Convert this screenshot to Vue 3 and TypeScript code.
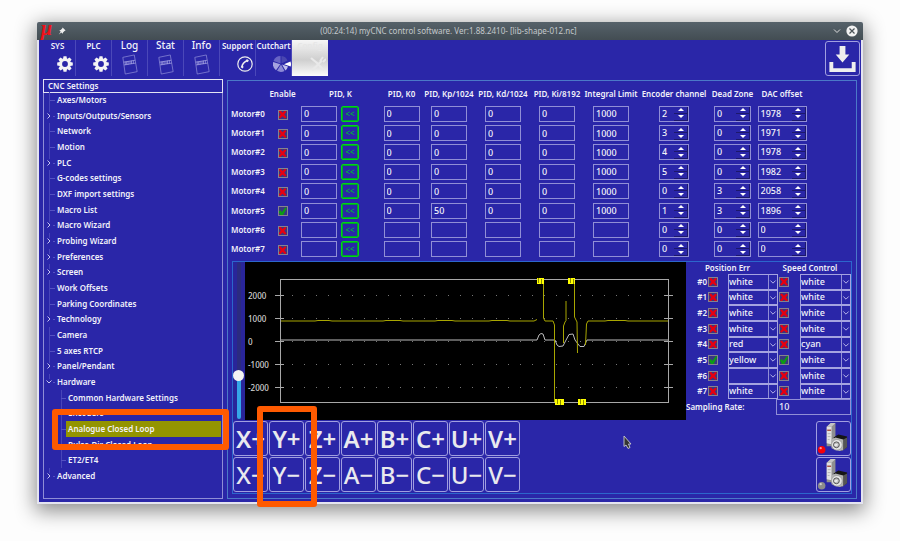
<script setup lang="ts">
import { reactive, ref } from 'vue'

interface TreeItem {
  label: string
  depth: number
  state?: 'closed' | 'open'
  selected?: boolean
}

interface Motor {
  enabled: boolean
  values: string[]
  encoder: number
  deadZone: number
  offset: number
}

interface Trace {
  position: boolean
  positionColor: string
  speed: boolean
  speedColor: string
}

const tabs = [
  { label: 'SYS', icon: 'gear' },
  { label: 'PLC', icon: 'gear' },
  { label: 'Log', icon: 'page', large: true },
  { label: 'Stat', icon: 'page', large: true },
  { label: 'Info', icon: 'page', large: true },
  { label: 'Support', icon: 'phone' },
  { label: 'Cutchart', icon: 'pie' },
  { label: 'Config', icon: 'tools', active: true },
]

const tree: TreeItem[] = [
  { label: 'Axes/Motors', depth: 0 },
  { label: 'Inputs/Outputs/Sensors', depth: 0, state: 'closed' },
  { label: 'Network', depth: 0 },
  { label: 'Motion', depth: 0 },
  { label: 'PLC', depth: 0, state: 'closed' },
  { label: 'G-codes settings', depth: 0 },
  { label: 'DXF import settings', depth: 0 },
  { label: 'Macro List', depth: 0 },
  { label: 'Macro Wizard', depth: 0, state: 'closed' },
  { label: 'Probing Wizard', depth: 0, state: 'closed' },
  { label: 'Preferences', depth: 0, state: 'closed' },
  { label: 'Screen', depth: 0, state: 'closed' },
  { label: 'Work Offsets', depth: 0 },
  { label: 'Parking Coordinates', depth: 0 },
  { label: 'Technology', depth: 0, state: 'closed' },
  { label: 'Camera', depth: 0 },
  { label: '5 axes RTCP', depth: 0 },
  { label: 'Panel/Pendant', depth: 0, state: 'closed' },
  { label: 'Hardware', depth: 0, state: 'open' },
  { label: 'Common Hardware Settings', depth: 1 },
  { label: 'Encoders', depth: 1 },
  { label: 'Analogue Closed Loop', depth: 1, selected: true },
  { label: 'Pulse-Dir Closed Loop', depth: 1 },
  { label: 'ET2/ET4', depth: 1 },
  { label: 'Advanced', depth: 0, state: 'closed' },
]

const gains = ['PID, K0', 'PID, Kp/1024', 'PID, Kd/1024', 'PID, Ki/8192', 'Integral Limit']

const motor = (enabled: boolean, values: string[], encoder: number, deadZone: number, offset: number): Motor =>
  ({ enabled, values, encoder, deadZone, offset })

const motors = reactive<Motor[]>([
  motor(false, ['0', '0', '0', '0', '0', '1000'], 2, 0, 1978),
  motor(false, ['0', '0', '0', '0', '0', '1000'], 3, 0, 1971),
  motor(false, ['0', '0', '0', '0', '0', '1000'], 4, 0, 1978),
  motor(false, ['0', '0', '0', '0', '0', '1000'], 5, 0, 1982),
  motor(false, ['0', '0', '0', '0', '0', '1000'], 0, 3, 2058),
  motor(true, ['0', '0', '50', '0', '0', '1000'], 1, 3, 1896),
  motor(false, ['', '', '', '', '', ''], 0, 0, 0),
  motor(false, ['', '', '', '', '', ''], 0, 0, 0),
])

const spins: { key: 'encoder' | 'deadZone' | 'offset'; label: string }[] = [
  { key: 'encoder', label: 'Encoder channel' },
  { key: 'deadZone', label: 'Dead Zone' },
  { key: 'offset', label: 'DAC offset' },
]

const traces = reactive<Trace[]>(
  ['white', 'white', 'white', 'white', 'red', 'yellow', '', 'white'].map((color, i) => ({
    position: i === 5,
    positionColor: color,
    speed: i === 5,
    speedColor: i === 4 ? 'cyan' : 'white',
  })),
)
const colors = ['', 'white', 'red', 'cyan', 'yellow']

const scale = ref(26)
const samplingRate = ref('10')

const ticks = [
  { label: '2000', y: 33 },
  { label: '1000', y: 56 },
  { label: '0', y: 79 },
  { label: '-1000', y: 102 },
  { label: '-2000', y: 125 },
]
const axes = ['X', 'Y', 'Z', 'A', 'B', 'C', 'U', 'V']
const teeth = [0, 45, 90, 135, 180, 225, 270, 315]
</script>

<template>
  <main class="desktop">
    <div class="window">
      <header class="titlebar">
        <span class="mu">μ</span>
        <svg class="pin" viewBox="0 0 8 8"><path d="M4.600 .4 7.600 3.400 6.500 3.900 5 5.400 4.800 6.700 3.300 5.400 .8 7.500 2.700 4.700 1.300 3.300 2.700 3 4.200 1.500Z" fill="#eee" /></svg>
        <h1>(00:24:14) myCNC control software. Ver:1.88.2410- [lib-shape-012.nc]</h1>
        <button class="chrome" aria-label="Minimize">
          <svg viewBox="0 0 12 12"><path d="m3 4.500 3 3 3-3" fill="none" stroke="#ddd" /></svg>
        </button>
        <button class="chrome" aria-label="Close">
          <svg viewBox="0 0 12 12"><circle cx="6" cy="6" r="5.600" fill="#f2f2f2" /><path d="m3.500 3.500 5 5m0-5-5 5" stroke="#4a5257" stroke-width="1.200" /></svg>
        </button>
      </header>

      <div class="toolbar">
        <nav class="tabs">
          <button v-for="tab in tabs" :key="tab.label" :class="['tab', { large: tab.large, active: tab.active }]">
            <span>{{ tab.label }}</span>
            <svg v-if="tab.icon === 'gear'" class="icon right" viewBox="0 0 16 16">
              <circle cx="8" cy="8" r="4.300" fill="none" stroke="#f4f4f4" stroke-width="2.800" />
              <path v-for="a in teeth" :key="a" d="M6.500 .2h3l.5 2.800h-4Z" fill="#f4f4f4" :transform="`rotate(${a} 8 8)`" />
            </svg>
            <svg v-else-if="tab.icon === 'page'" class="icon page" viewBox="0 0 18 22">
              <g fill="none" stroke="#9896dc" stroke-width=".7">
                <path d="M1.500 3.500 13.500 1 16.500 18.500 4 21Z" />
                <path d="M2.500 8.500 14.500 6.500M3 11.500l12-2M4 8v3.500M5.500 8v3m1.500-3.500v3.500m2-3.500v3m1.500-3.500v3.500m2-3.500v3" stroke="#b3b1ea" />
              </g>
            </svg>
            <svg v-else-if="tab.icon === 'phone'" class="icon right" viewBox="0 0 16 16">
              <circle cx="8" cy="8" r="7.200" fill="none" stroke="#eee" stroke-width="1.200" />
              <path d="M4.900 11Q5.500 6.500 9.900 4.700" stroke="#eee" stroke-width="1.500" fill="none" />
              <path d="m4.200 10.400 2 1.200M9.300 3.900l2 1.500" stroke="#eee" stroke-width="2" />
            </svg>
            <svg v-else-if="tab.icon === 'pie'" class="icon pie" viewBox="0 0 18 16">
              <path d="M7.500 7.500V0A7.500 7.500 0 0 0 .5 5Z" fill="#6865c5" />
              <path d="M8.500 7.500V0a7 7 0 0 1 6 4.500Z" fill="#4946b0" />
              <path d="M7.300 8.300.2 6A8 8 0 0 0 3 14.200Z" fill="#a6a4e0" />
              <path d="M8 8.500 4 14.800a8 8 0 0 0 7.500.2Z" fill="#8c89d5" />
              <path d="M9 8.500l3.400 6A8 8 0 0 0 15 10.500Z" fill="#c1bfeb" />
              <path d="m11 8.300 6.500-2.800a8 8 0 0 1 .2 5Z" fill="#fff" />
            </svg>
            <svg v-else class="icon right" viewBox="0 0 16 16">
              <path d="m1 2 6 5 7 7.500M2 14.500 12 4.500" stroke="#e9e9e9" stroke-width="2.200" fill="none" />
              <path d="m10 5 3-4m0 5 3-3" stroke="#e9e9e9" stroke-width="2" />
            </svg>
          </button>
        </nav>
        <button class="save frame" aria-label="Save">
          <svg viewBox="0 0 34 34"><path d="M14 4h6v9h4L17 21 10 13h4Z" fill="#eee" /><path d="M5.500 20.500V29h23V20.500" fill="none" stroke="#eee" stroke-width="4" /></svg>
        </button>
      </div>

      <div class="body">
        <aside class="sidebar">
          <h2>CNC Settings</h2>
          <ul class="tree">
            <li v-for="item in tree" :key="item.label" :class="{ child: item.depth === 1, selected: item.selected, branch: item.state }">
              <svg v-if="item.state" class="chevron" viewBox="0 0 6 6">
                <path :d="item.state === 'open' ? 'm.5 1.500 2.500 2.500 2.500-2.500' : 'm1.500 .5 2.500 2.500-2.500 2.500'" />
              </svg>
              <a href="#">{{ item.label }}</a>
              <i v-if="item.selected" class="callout tree-callout"></i>
            </li>
          </ul>
        </aside>

        <section class="panel">
          <table class="motors">
            <colgroup>
              <col class="c-name"><col class="c-enable"><col class="c-k"><col class="c-k0">
              <col class="c-gain"><col class="c-gain"><col class="c-gain"><col class="c-gain">
              <col class="c-encoder"><col class="c-dead"><col class="c-offset"><col>
            </colgroup>
            <thead>
              <tr>
                <th></th>
                <th>Enable</th>
                <th>PID, K</th>
                <th v-for="gain in gains" :key="gain">{{ gain }}</th>
                <th v-for="spin in spins" :key="spin.key">{{ spin.label }}</th>
              </tr>
            </thead>
            <tbody>
              <tr v-for="(m, i) in motors" :key="i">
                <td class="name"><label :for="`enable-${i}`">Motor#{{ i }}</label></td>
                <td><input :id="`enable-${i}`" v-model="m.enabled" type="checkbox" class="tick"></td>
                <td>
                  <div class="k">
                    <input v-model="m.values[0]" class="field" :aria-label="`Motor ${i} PID, K`">
                    <button class="apply" :aria-label="`Apply K to motor ${i}`">&lt;&lt;</button>
                  </div>
                </td>
                <td v-for="(gain, g) in gains" :key="gain">
                  <input v-model="m.values[g + 1]" class="field" :aria-label="`Motor ${i} ${gain}`">
                </td>
                <td v-for="spin in spins" :key="spin.key">
                  <div :class="['spin', spin.key]">
                    <input v-model.number="m[spin.key]" type="number" :aria-label="`Motor ${i} ${spin.label}`">
                    <div class="steps">
                      <button aria-label="Increase" @click="m[spin.key]++"><svg viewBox="0 0 8 4"><path d="M4 0 8 4H0Z" /></svg></button>
                      <button aria-label="Decrease" @click="m[spin.key]--"><svg viewBox="0 0 8 4"><path d="M0 0h8L4 4Z" /></svg></button>
                    </div>
                  </div>
                </td>
              </tr>
            </tbody>
          </table>

          <div class="scope">
            <div class="scope-top">
              <div class="slider">
                <input v-model="scale" type="range" min="0" max="100" aria-label="Vertical scale">
              </div>
              <svg class="chart" viewBox="0 0 441 158">
                <g stroke="#a8a8a8" fill="none">
                  <rect x="35.500" y="17.500" width="388" height="123" />
                  <path v-for="t in ticks" :key="t.label" :d="`M30 ${t.y + 0.5}h9m380 0h9`" />
                </g>
                <path v-for="t in ticks" :key="t.y" :d="`M47 ${t.y + 0.5}H419`" stroke="#777" stroke-dasharray="1 11" />
                <text v-for="t in ticks" :key="t.label" x="3" :y="t.y + 4">{{ t.label }}</text>
                <path class="white" d="M36 78H292L294 73 296 71.500 298 72 300 78H310L312 83 314 84.500 318 84 320 80 324 72.500 328 72 330 78 333 82 335 84.500H339L341 80 342 78H423" />
                <path class="yellow" d="M36 59H70L73 58.500H84L87 59H138L141 58.500H155L158 59H190L193 58.500H207L210 59H244L247 58.500H262L265 59H289L292 57.500M298.500 20V56L300 59H308L309.500 63V140M318.500 81V64L320 60 321 58.500V39M329.500 20V55L332 60 332.500 91M340.500 83 341.500 62 343 59H360L363 58.500H380L383 59H423" />
                <path class="burst" d="M292 19h7M323 19h7M310 140h9M333 140h8" />
                <path class="grain" d="M293.500 16v5M296.500 17v5M325.500 16v5M328.500 17v5M312.500 137v5M315.500 138v5M335.500 137v5M338.500 138v5" />
              </svg>
              <div class="traces">
                <span class="group">Position Err</span>
                <span class="group speed">Speed Control</span>
                <template v-for="(t, i) in traces" :key="i">
                  <label class="number" :for="`pos-${i}`">#{{ i }}</label>
                  <input :id="`pos-${i}`" v-model="t.position" type="checkbox" class="tick">
                  <div class="combo">
                    <select v-model="t.positionColor" :aria-label="`Position colour ${i}`"><option v-for="c in colors" :key="c">{{ c }}</option></select>
                    <svg viewBox="0 0 9 14"><path d="m1.500 5.500 3 3 3-3" /></svg>
                  </div>
                  <input v-model="t.speed" type="checkbox" class="tick" :aria-label="`Speed ${i}`">
                  <div class="combo">
                    <select v-model="t.speedColor" :aria-label="`Speed colour ${i}`"><option v-for="c in colors" :key="c">{{ c }}</option></select>
                    <svg viewBox="0 0 9 14"><path d="m1.500 5.500 3 3 3-3" /></svg>
                  </div>
                </template>
                <div class="rate">
                  <label for="rate">Sampling Rate:</label>
                  <input id="rate" v-model="samplingRate">
                </div>
              </div>
            </div>

            <div class="scope-bottom">
              <div class="jog">
                <button v-for="a in axes" :key="`${a}+`" class="frame plus">{{ a }}+</button>
                <button v-for="a in axes" :key="`${a}-`" class="frame">{{ a }}−</button>
                <i class="callout jog-callout"></i>
              </div>
              <svg class="cursor" viewBox="0 0 9 14"><path d="M1 1v10.500L3 10l2 3.500L7 12.500 5.500 9H8Z" fill="#333" stroke="#ccc" stroke-width=".9" /></svg>
              <div class="drives">
                <button v-for="led in ['#f80008', '#8b8b8b']" :key="led" class="frame" aria-label="Servo drive">
                  <svg viewBox="0 0 34 34">
                    <path d="m10 5 5-4h4v22l-4 2h-5Z" fill="#8f8f8f" />
                    <path d="M10 5h5v18l-5-1Z" fill="#e2e2e2" />
                    <path d="m10 5 4-4h5l-4 4Z" fill="#c5c5c5" />
                    <path d="M10.500 8.500h4" stroke="#a55448" stroke-width="1.500" />
                    <path d="M11 12h3m-3 3h3m-3 3h2" stroke="#aaa" stroke-width=".8" />
                    <path d="m17 16 5-3 9 2v11l-6 4Z" fill="#151515" />
                    <path d="m27 18 4-2v10l-4 3Z" fill="#555" />
                    <path d="m15 18 4-2 8 2v11l-4 1-8-3Z" fill="#b3b3b3" />
                    <circle cx="20.500" cy="23.500" r="5.500" fill="#e6e6e6" stroke="#999" stroke-width=".8" />
                    <circle cx="20" cy="23.500" r="3" fill="#c2c2c2" stroke="#444" stroke-width=".9" />
                    <path d="m18 24 3-.5" stroke="#f4f4f4" stroke-width="1.500" />
                    <circle cx="4.800" cy="28.500" r="3.900" :fill="led" />
                    <circle cx="3.800" cy="27" r="1.200" fill="#fff" opacity=".6" />
                  </svg>
                </button>
              </div>
            </div>
          </div>
        </section>
      </div>
    </div>
  </main>
</template>

<style>
body {
  background: #fdfdfd;
}
</style>

<style scoped>
* {
  box-sizing: border-box;
}

.desktop {
  display: flex;
  min-height: 100vh;
  padding: 22px 37px 38px;
  overflow: hidden;
  color: #f2f2fa;
  font: 600 8px/12px 'Noto Sans', 'Open Sans', sans-serif;
}

.window {
  display: flex;
  flex: 1;
  flex-direction: column;
  min-width: 0;
  border: solid #e4e4f0;
  border-width: 0 2px 2px;
  border-radius: 2px 2px 0 0;
  background: #2a26a8;
  box-shadow: 0 5px 20px 2px rgb(0 0 0 / 45%);
}

button,
input,
select {
  min-width: 0;
  margin: 0;
  padding: 0;
  border: 0;
  border-radius: 0;
  outline: 0;
  background: none;
  color: inherit;
  font: inherit;
}

input,
select {
  font-weight: 500;
  font-size: 9px;
}

svg {
  display: block;
}

h1,
h2 {
  margin: 0;
  font: inherit;
}

.titlebar {
  display: flex;
  align-items: center;
  gap: 3px;
  height: 18px;
  margin: 0 -2px;
  padding: 0 5px 0 4px;
  border-radius: 2px 2px 0 0;
  background: linear-gradient(#56626a, #434d53);
}

.titlebar h1 {
  flex: 1;
  color: #c3c8cb;
  font-weight: 400;
  text-align: center;
}

.mu {
  width: 14px;
  padding-bottom: 6px;
  color: #f01018;
  font: italic bold 20px/12px 'Liberation Serif', serif;
}

.pin {
  width: 8px;
}

.chrome svg {
  width: 12px;
}

.toolbar {
  display: flex;
  justify-content: space-between;
  height: 39px;
}

.tabs {
  display: flex;
  padding-left: 1px;
}

.tab {
  display: flex;
  flex-direction: column;
  align-items: center;
  gap: 5px;
  width: 36px;
  height: 36px;
  border-right: 1px solid #4b48b9;
  white-space: nowrap;
}

.tab span {
  line-height: 11px;
}

.tab.large span {
  font-weight: 500;
  font-size: 10px;
}

.tab.active {
  border: 0;
  background: linear-gradient(#f6f6f6, #cfcfcf 55%, #fbfbfb);
}

.tab.active span {
  color: #e6e6e6;
}

.icon {
  flex: none;
  height: 16px;
}

.right {
  align-self: flex-end;
  width: 16px;
  margin-right: 2px;
}

.page {
  width: 18px;
  height: 21px;
  margin-top: -2px;
}

.pie {
  align-self: flex-end;
  width: 18px;
}

.frame {
  border: 1px solid #a19fe0;
  border-radius: 3px;
}

.save {
  width: 35px;
  height: 35px;
  margin: 1px 1px 0 0;
}

.body {
  display: flex;
  flex: 1;
  gap: 4px;
  padding: 0 4px 3px;
}

.sidebar {
  display: flex;
  flex: none;
  flex-direction: column;
  width: 180px;
  border: 1px solid #8f8dd6;
}

.sidebar h2 {
  height: 14px;
  margin: -1px;
  padding-left: 4px;
  border: 1px solid #e4e4f4;
}

.tree {
  display: grid;
  flex: 1;
  grid-auto-rows: 1fr;
  margin: 0;
  padding: 0 1px 14px;
  list-style: none;
}

.tree li {
  position: relative;
  display: flex;
  align-items: center;
  padding-left: 12px;
}

.tree li::before {
  position: absolute;
  top: 0;
  bottom: 0;
  left: 4px;
  border-left: 1px solid #4845b8;
  content: '';
}

.tree li::after {
  position: absolute;
  top: 50%;
  left: 5px;
  width: 5px;
  border-top: 1px solid #5552c2;
  content: '';
}

.tree .branch::before {
  bottom: 70%;
}

.tree .branch::after {
  left: 8px;
  width: 2px;
}

.tree .child {
  padding-left: 21px;
}

.tree .child::before,
.tree .child::after {
  left: 16px;
}

.tree a {
  display: flex;
  flex: 1;
  align-items: center;
  align-self: stretch;
  color: inherit;
  text-decoration: none;
}

.tree .child a {
  padding-left: 2px;
}

.tree .selected a {
  background: #939400;
}

.chevron {
  position: absolute;
  left: 1px;
  width: 6px;
}

.chevron path,
.combo path {
  fill: none;
  stroke: #c5c3f0;
  stroke-width: 1;
}

.callout {
  position: absolute;
  z-index: 5;
  border: 6px solid #ff5a00;
  border-radius: 3px;
  pointer-events: none;
}

.tree-callout {
  inset: -12px -8px -13px 7px;
}

.panel {
  display: flex;
  flex: 1;
  flex-direction: column;
  min-width: 0;
  margin-top: 1px;
  border: 1px solid #4b78c8;
}

.motors {
  width: 100%;
  height: 178px;
  padding: 3px 0 0 3px;
  border-spacing: 0;
  table-layout: fixed;
}

.c-name { width: 34px; }
.c-enable { width: 35px; }
.c-k { width: 81px; }
.c-k0 { width: 41px; }
.c-gain { width: 54px; }
.c-encoder { width: 72px; }
.c-dead { width: 45px; }
.c-offset { width: 54px; }

.motors th,
.motors td {
  padding: 0;
  font-weight: 600;
  text-align: center;
  white-space: nowrap;
}

.motors th {
  height: 20px;
}

.motors .name {
  text-align: left;
}

.tick {
  position: relative;
  display: inline-block;
  width: 10px;
  height: 10px;
  border: 1px solid #85838f;
  background: #3a3580;
  vertical-align: middle;
  appearance: none;
}

.tick::before {
  position: absolute;
  inset: 0;
  background: #e60010;
  clip-path: polygon(0 10%, 25% 0, 50% 28%, 80% 0, 100% 15%, 72% 50%, 100% 85%, 80% 100%, 50% 72%, 20% 100%, 0 85%, 28% 50%);
  content: '';
}

.tick:checked::before {
  background: #0c9c14;
  clip-path: polygon(0 50%, 25% 35%, 42% 60%, 85% 0, 100% 0, 100% 20%, 55% 100%, 25% 100%);
}

.k {
  display: flex;
  gap: 4px;
  padding-left: 1px;
}

.field {
  width: 36px;
  height: 16px;
  padding: 0 2px;
  border: 1px solid #918fd6;
  vertical-align: middle;
}

.apply {
  width: 18px;
  height: 16px;
  border: 1px solid #00d814;
  border-radius: 2px;
  box-shadow: inset 0 0 0 1px #00a030;
  color: #00b03c;
  line-height: 12px;
}

.spin {
  display: inline-flex;
  width: 37px;
  height: 16px;
  border: 1px solid #918fd6;
  vertical-align: middle;
}

.spin.encoder {
  width: 30px;
}

.spin.offset {
  width: 49px;
}

.spin input {
  flex: 1;
  width: 0;
  padding-left: 2px;
  appearance: textfield;
}

.spin input::-webkit-inner-spin-button {
  display: none;
}

.steps {
  display: flex;
  flex: none;
  flex-direction: column;
  width: 14px;
}

.steps button {
  display: grid;
  flex: 1;
  place-items: center;
  border: solid #1c186c;
  border-width: 0 1px 1px 0;
}

.steps svg {
  width: 6px;
  height: 3px;
  fill: #fff;
}

.scope {
  display: flex;
  flex: 1;
  flex-direction: column;
  margin: 2px 4px 4px;
  border: 1px solid #2c66cc;
}

.scope-top {
  display: flex;
  flex: 1;
}

.slider {
  display: flex;
  flex: none;
  justify-content: center;
  width: 12px;
  background: #29259a;
}

.slider input {
  width: 11px;
  height: 157px;
  writing-mode: vertical-lr;
  direction: rtl;
  appearance: none;
}

.slider input::-webkit-slider-runnable-track {
  width: 4px;
  height: 100%;
  border-radius: 2px;
  background: linear-gradient(to top, #35a5e8 28%, #2b2b80 28%);
}

.slider input::-webkit-slider-thumb {
  width: 11px;
  height: 11px;
  margin-left: -4px;
  border-radius: 50%;
  background: #f3f3f3;
  appearance: none;
}

.chart {
  flex: 1;
  min-width: 0;
  background: #000;
}

.chart text {
  fill: #d5d5d5;
  font-weight: 500;
}

.chart .white {
  fill: none;
  stroke: #bcbcbc;
}

.chart .yellow {
  fill: none;
  stroke: #a8a600;
}

.chart .burst {
  stroke: #ffff00;
  stroke-width: 6;
}

.chart .grain {
  stroke: #8a8800;
}

.traces {
  display: grid;
  flex: none;
  grid-template-rows: 12px;
  grid-template-columns: 21px 21px 50px 22px 51px;
  grid-auto-rows: 1fr;
  align-items: center;
  padding-bottom: 5px;
}

.group {
  grid-column: span 3;
  padding-right: 9px;
  text-align: center;
}

.group.speed {
  grid-column: span 2;
}

.number {
  text-align: right;
}

.traces .tick {
  margin-left: 1px;
}

.combo {
  display: flex;
  align-self: stretch;
  border: 1px solid #a5a3e0;
}

.combo select {
  flex: 1;
  width: 0;
  appearance: none;
}

.combo option {
  color: #000;
}

.combo svg {
  align-self: stretch;
  width: 9px;
  border-left: 1px solid #918fd6;
}

.rate {
  display: flex;
  grid-column: 1 / -1;
  align-self: stretch;
  align-items: center;
  justify-content: space-between;
}

.rate input {
  align-self: stretch;
  width: 75px;
  padding: 0 2px;
  border: 1px solid #918fd6;
}

.scope-bottom {
  position: relative;
  display: flex;
  flex: none;
  justify-content: space-between;
  padding: 1px 0;
}

.jog {
  position: relative;
  display: grid;
  grid-template-columns: repeat(8, 35px);
  grid-auto-rows: 35px;
  gap: 1px;
}

.jog button {
  color: #e9e9ee;
  font-weight: 500;
  font-size: 24px;
  line-height: 33px;
  white-space: nowrap;
}

.jog .plus {
  font-weight: 600;
}

.jog-callout {
  top: -15px;
  bottom: -15px;
  left: 24px;
  width: 60px;
}

.cursor {
  position: absolute;
  top: 15px;
  left: 390px;
  width: 9px;
}

.drives {
  display: grid;
  grid-auto-rows: 35px;
  gap: 1px;
}

.drives button {
  width: 35px;
}
</style>
